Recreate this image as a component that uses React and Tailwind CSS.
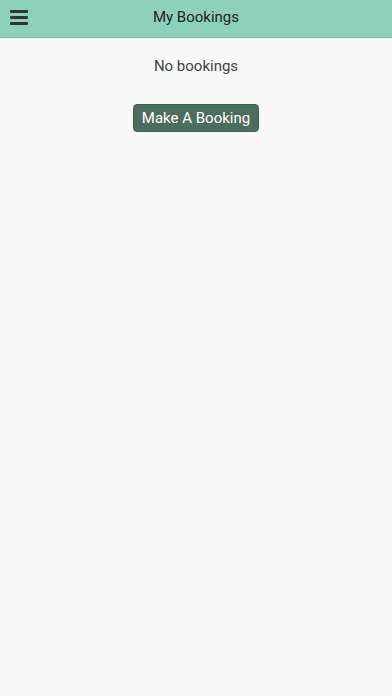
import React from "react";

export default function App() {
  return (
    <div className="min-h-[696px] bg-[#f8f8f8] font-['Roboto',sans-serif]">
      {/* Header */}
      <div className="relative h-[38px] bg-[#8ed1bb] border-b border-[#7cb8a4] flex items-center justify-center">
        <button className="absolute left-[10px] top-[10px] flex flex-col gap-[3px]">
          <span className="block w-[18px] h-[3px] bg-[#333] rounded-[1px]" />
          <span className="block w-[18px] h-[3px] bg-[#333] rounded-[1px]" />
          <span className="block w-[18px] h-[3px] bg-[#333] rounded-[1px]" />
        </button>
        <h1 className="text-[15px] text-[#222] leading-none -mt-[2px]">My Bookings</h1>
      </div>

      {/* Content */}
      <div className="flex flex-col items-center pt-[18px]">
        <p className="text-[15px] text-[#444] leading-[20px]">No bookings</p>
        <button className="mt-[28px] h-[28px] px-[8px] rounded-[4px] bg-[#4b6d60] border border-[#3f5e52] text-white text-[15px] leading-none">
          Make A Booking
        </button>
      </div>
    </div>
  );
}
